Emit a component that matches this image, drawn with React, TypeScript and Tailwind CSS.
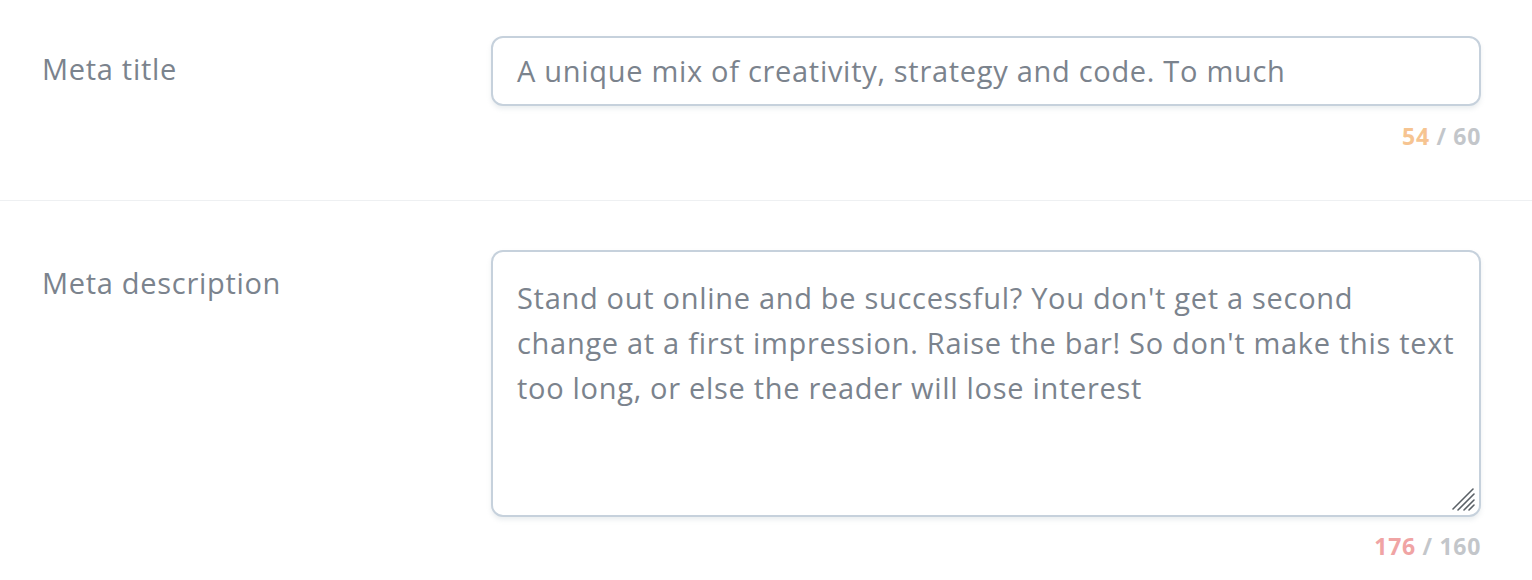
const titleValue = 'A unique mix of creativity, strategy and code. To much';
const descLines = [
  "Stand out online and be successful? You don't get a second",
  "change at a first impression. Raise the bar! So don't make this text",
  'too long, or else the reader will lose interest',
];

function Counter({ count, max, color }: { count: number; max: number; color: string }) {
  return (
    <div className="flex justify-end text-[23px] font-bold leading-none text-[#c3c6ca] whitespace-pre">
      <span className={color}>{count}</span>
      <span>{` / ${max}`}</span>
    </div>
  );
}

export default function App() {
  return (
    <div className="w-[1532px] h-[580px] bg-white font-['Open_Sans','Liberation_Sans',sans-serif] text-[#7b838d] overflow-hidden tracking-[0.7px]">
      {/* Meta title */}
      <div className="grid grid-cols-[491px_990px] pt-[36px] pb-[52px] border-b border-[#eef0f2]">
        <label className="pl-[42px] pt-[13px] text-[29px] leading-[40px]">Meta title</label>
        <div>
          <div className="h-[70px] rounded-[12px] border-2 border-[#c6d1dc] bg-white shadow-[0_3px_4px_rgba(180,190,200,0.25)] flex items-center px-[24px] text-[29px] whitespace-nowrap">
            {titleValue}
          </div>
          <div className="mt-[19px]">
            <Counter count={54} max={60} color="text-[#f6c491]" />
          </div>
        </div>
      </div>

      {/* Meta description */}
      <div className="grid grid-cols-[491px_990px] pt-[49px]">
        <label className="pl-[42px] pt-[13px] text-[29px] leading-[40px]">Meta description</label>
        <div>
          <div className="relative h-[267px] rounded-[12px] border-2 border-[#c6d1dc] bg-white shadow-[0_3px_4px_rgba(180,190,200,0.25)] px-[24px] pt-[23px] text-[29px] leading-[45px]">
            {descLines.map((l) => (
              <div key={l} className="whitespace-nowrap">{l}</div>
            ))}
            <svg className="absolute right-[2px] bottom-[2px]" width="28" height="28" viewBox="0 0 28 28">
              <g stroke="#5a6066" strokeWidth="1.6" strokeLinecap="round">
                <line x1="9" y1="25" x2="25" y2="9" />
                <line x1="15" y1="25" x2="25" y2="15" />
                <line x1="4" y1="24" x2="24" y2="4" />
                <line x1="20" y1="25" x2="25" y2="20" />
              </g>
            </svg>
          </div>
          <div className="mt-[18px]">
            <Counter count={176} max={160} color="text-[#f0a4a4]" />
          </div>
        </div>
      </div>
    </div>
  );
}
